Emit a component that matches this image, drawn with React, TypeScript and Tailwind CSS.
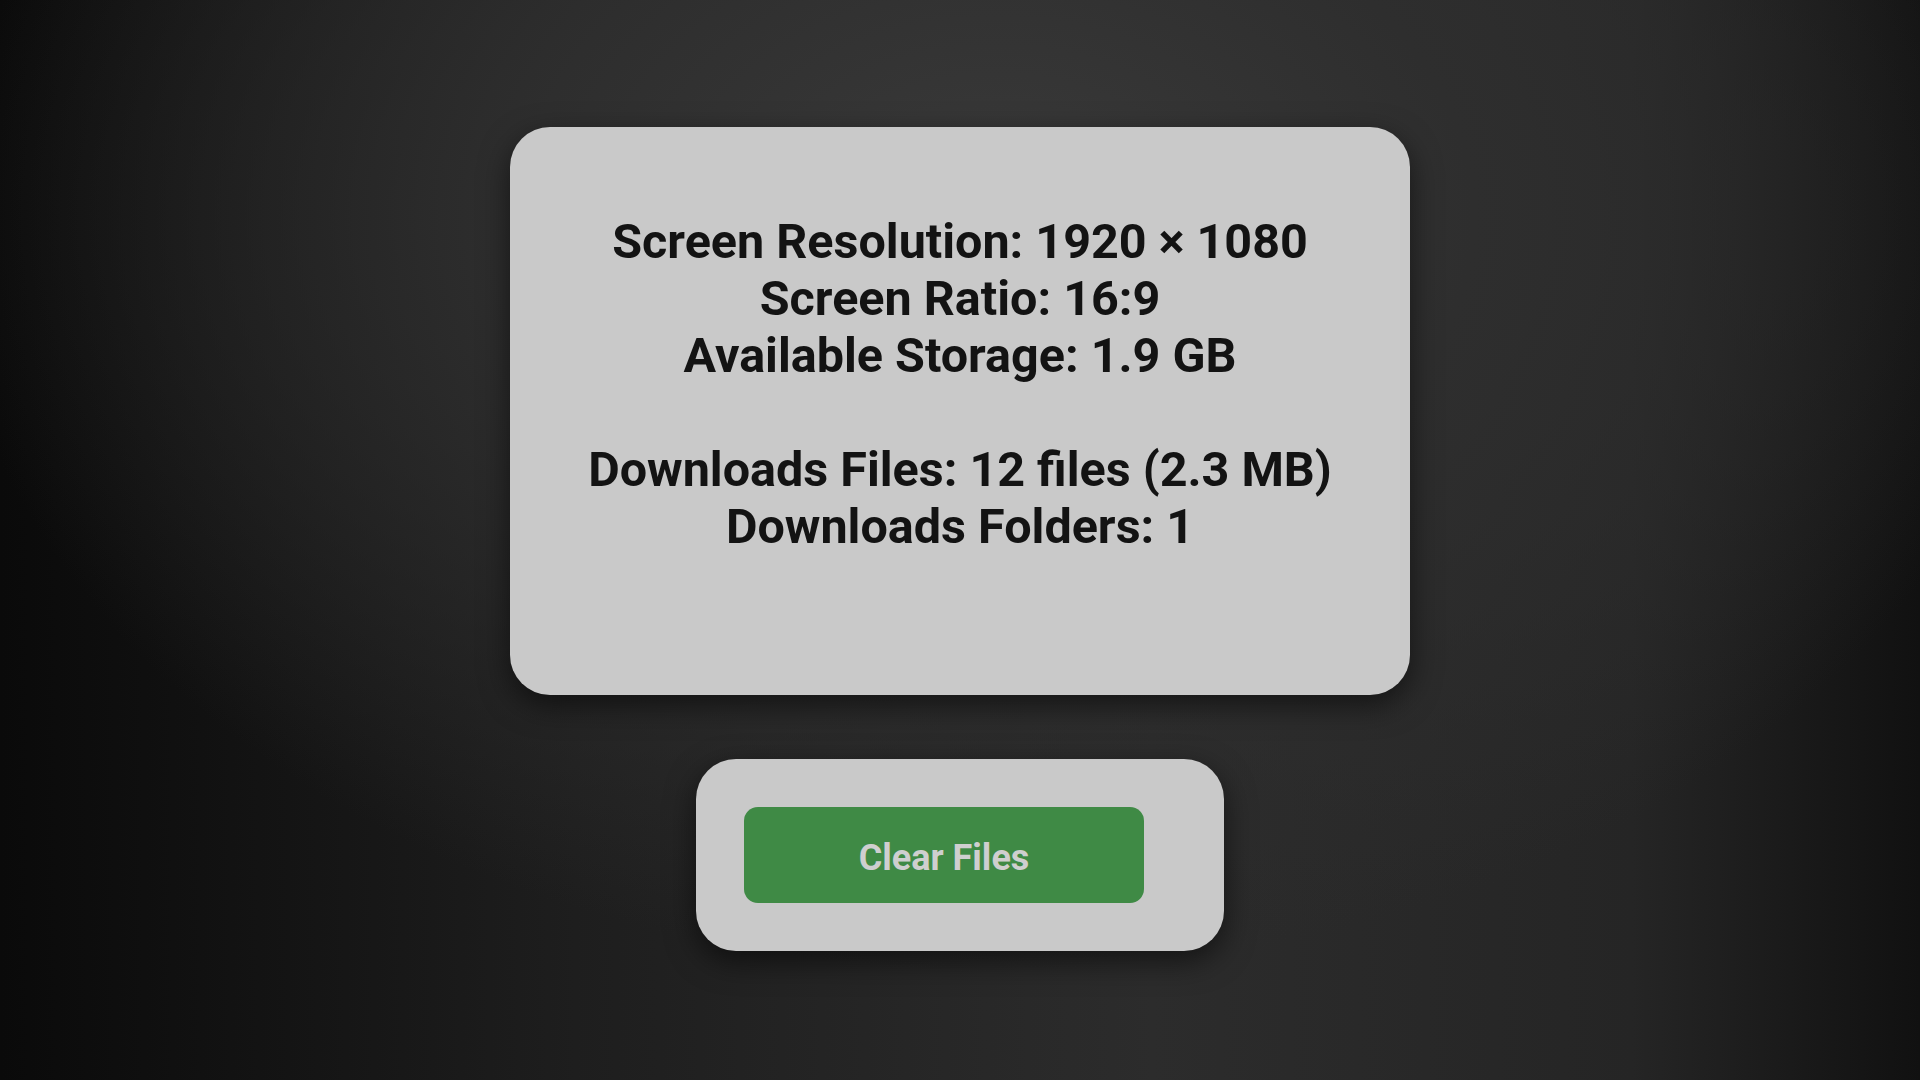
import React from 'react';

const stats = [
  'Screen Resolution: 1920 × 1080',
  'Screen Ratio: 16:9',
  'Available Storage: 1.9 GB',
  '',
  'Downloads Files: 12 files (2.3 MB)',
  'Downloads Folders: 1',
];

const App: React.FC = () => {
  return (
    <div className="min-h-screen w-full flex flex-col items-center pt-[127px] font-['Roboto',_'Liberation_Sans',_sans-serif] bg-[radial-gradient(ellipse_55%_70%_at_52%_20%,#3a3a3a_0%,#2e2e2e_45%,rgba(40,40,40,0)_100%),linear-gradient(90deg,#0a0a0a_0%,#1e1e1e_30%,#2c2c2c_60%,#252525_85%,#111111_100%)]">
      {/* Device info card */}
      <div className="w-[900px] h-[568px] rounded-[40px] bg-[#c9c9c9] pt-[86px] shadow-[0_10px_30px_rgba(0,0,0,0.55)]">
        <div className="text-center text-[48.5px] leading-[57px] font-bold text-[#131313]">
          {stats.map((line, i) => (
            <div key={i} className="h-[57px]">
              {line}
            </div>
          ))}
        </div>
      </div>

      {/* Actions */}
      <div className="mt-[64px] w-[528px] h-[192px] rounded-[40px] bg-[#c9c9c9] pl-[48px] pt-[48px] shadow-[0_10px_30px_rgba(0,0,0,0.55)]">
        <button className="w-[400px] h-[96px] rounded-[14px] bg-[#3f8a45] text-[36px] font-bold text-[#cfcfcf] flex items-center justify-center pt-[5px]">
          Clear Files
        </button>
      </div>
    </div>
  );
};

export default App;
